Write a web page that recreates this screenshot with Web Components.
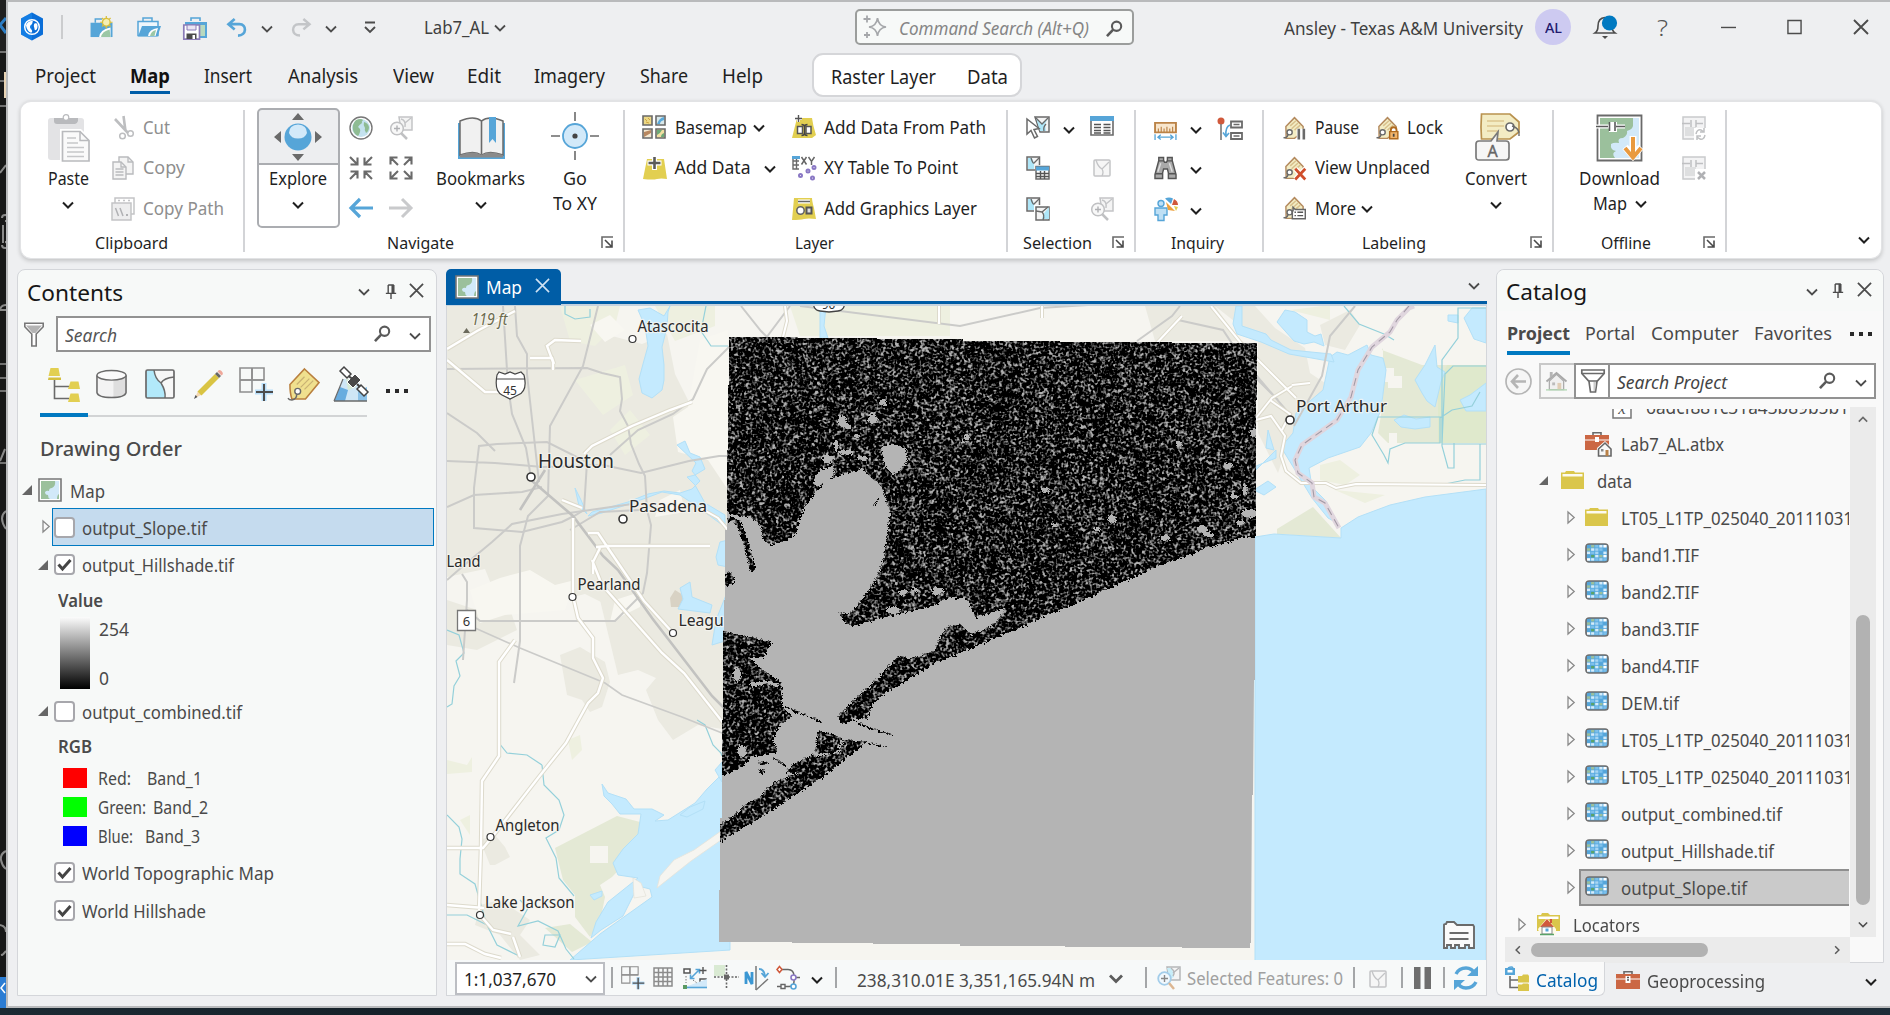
<!DOCTYPE html>
<html lang="en">
<head>
<meta charset="utf-8">
<title>Lab7_AL - Map</title>
<style>
html,body{margin:0;width:1890px;height:1015px;overflow:hidden;background:#16212a}
body{font-family:"Noto Sans","Open Sans",sans-serif;font-size:17.5px;color:#1f1f1f}
</style>
</head>
<body>
<gis-app></gis-app>
<script>
/* ---------- layout helpers: flow rows and stacks spaced by margins ---------- */
const row = (x0, h, items, cls = '') => {
  let c = x0;
  return `<div class="row ${cls}" style="height:${h}px">` + items.map(([x, w, html, dy]) => {
    const m = x - c; c = x + w;
    return `<span class="cell" style="margin-left:${m}px;width:${w}px;${dy ? `margin-top:${dy * 2}px` : ''}">${html}</span>`;
  }).join('') + '</div>';
};
const stack = (y0, rows) => {
  let c = y0;
  return '<div class="stack">' + rows.map(([y, h, html]) => {
    const m = y - c; c = y + h;
    return `<div style="margin-top:${m}px;height:${h}px">${html}</div>`;
  }).join('') + '</div>';
};
const T = (x, w, text, css = '', dy = 0) => [x, w, `<fit-text w="${w}" style="${css}">${text}</fit-text>`, dy];
const I = (x, name, w = 24, h = w, dy = 0) => [x, w, `<ui-icon name="${name}" w="${w}" h="${h}"></ui-icon>`, dy];
const base = `*{box-sizing:border-box}.row{display:flex;align-items:center}.cell{display:flex;flex:none;align-items:center;height:auto}.stack{display:flex;flex-direction:column}.stack>div{flex:none}`;

const define = (name, css, html, after) => customElements.define(name, class extends HTMLElement {
  constructor() {
    super();
    this.attachShadow({ mode: 'open' });
  }
  connectedCallback() {
    this.shadowRoot.innerHTML = `<style>${base}${css}</style>` + (typeof html === 'function' ? html(this) : html);
    if (after) after(this);
  }
});

/* ---------- icons ---------- */
const G = '#6a6a6a', B = '#56a5d8', LB = '#d2e9f9', Y = '#e2cf51';
const rasterCells = () => {
  const c = ['#7ec0ea', '#d5ecfa', '#56a5d8', '#9bbf9b', '#fff', '#a9d5f2', '#5aa368'];
  const m = [[2,3,0,1,4],[3,1,5,0,2],[1,0,5,2,1],[2,6,1,3,4],[4,1,0,5,0]];
  let s = '';
  m.forEach((r, j) => r.forEach((v, i) => s += `<rect x="${2 + i * 4.1}" y="${2 + j * 3.3}" width="3.2" height="2.5" fill="${c[v]}"/>`));
  return s;
};
const tagSmall = `<path d="M2 7L8 .8 14 7v3.5l-6 4.7H2.2z" fill="#f3ecc4" stroke="#b48a5e"/><path d="M5 6.5l4-3.5M6 8.500l4.500-4M8 9.500L12 6" stroke="#d8c08c"/><circle cx="4.600" cy="11" r="1.800" fill="#fff" stroke="#6a6a6a"/><path d="M3.600 12.500C3 14.500 1.500 15.300.4 14.500" stroke="#6a6a6a" fill="none"/>`;
const icons = {
  chev: ['12 8', `<path d="M1 1.500l5 5 5-5" fill="none" stroke="#1f1f1f" stroke-width="2"/>`],
  chevg: ['12 8', `<path d="M1 1.500l5 5 5-5" fill="none" stroke="#4c4c4c" stroke-width="1.800"/>`],
  chevb: ['14 9', `<path d="M1 1.500l6 6 6-6" fill="none" stroke="#5c5c5c" stroke-width="2.800"/>`],
  chevup: ['12 8', `<path d="M1 6.500l5-5 5 5" fill="none" stroke="#6a6a6a" stroke-width="2"/>`],
  chevl: ['8 12', `<path d="M6.500 1l-5 5 5 5" fill="none" stroke="#5a5a5a" stroke-width="2"/>`],
  chevr: ['8 12', `<path d="M1.500 1l5 5-5 5" fill="none" stroke="#5a5a5a" stroke-width="2"/>`],
  logo: ['22 24', `<path d="M11 -2.500l11 6v16l-11 6-11-6v-16z" fill="#0a6ed8"/><path d="M0 3.500l11-6v28l-11-6z" fill="#1b8cf0" opacity=".5"/><circle cx="11" cy="12" r="7.300" fill="none" stroke="#fff" stroke-width="1.500"/><path d="M5 10.500c1-4 5-5 7-4.500-1 1 0 1.500-1 3s-2 1-2 3 3 3 2 5-5-1-6-6.500zM13.500 8.500c2-1 3.500 0 3 3.500s-3 4-3 2-1.500-3 0-5.500z" fill="#fff"/>`],
  newp: ['24 22', `<path d="M0 6h23v15H0z" fill="${B}"/><path d="M5 6V2h7" fill="none" stroke="${B}" stroke-width="1.600"/><path d="M9 21q1-8 12-10v10z" fill="#fff"/><path d="M11 21q1-6 9-8l1 8z" fill="#9bc7a6"/><circle cx="16.500" cy="5.500" r="4" fill="#f5efb4" stroke="#d9bf3c" stroke-width="1.400"/><path d="M16.500-1v2.500M16.500 9.500V12M10 5.500h2.500M20.500 5.500H23M12 1l1.800 1.800M19.300 8.300L21 10M21 1l-1.800 1.800M13.800 8.300L12 10" stroke="#d9bf3c" stroke-width="1.300"/>`],
  openp: ['24 20', `<path d="M1 4.500h20v14H1z" fill="#eef6fc" stroke="${B}" stroke-width="1.500"/><path d="M6 4V1h9v3" fill="none" stroke="${B}" stroke-width="1.500"/><path d="M1 19.500L5 9h19l-3.500 10.500z" fill="${B}"/><path d="M11 19q1-7 10-8l-2.500 8z" fill="#fff"/><path d="M13 19q1-5 6-6l-1.500 6z" fill="#9bc7a6"/>`],
  savep: ['25 23', `<path d="M2 5h22v16H2z" fill="${B}"/><path d="M8 4V1h9v3" fill="none" stroke="${B}" stroke-width="1.600"/><path d="M15 8h7v11h-7z" fill="#b7d9bf"/><path d="M.8 8h15.700v14.200H.8z" fill="#fff" stroke="#8b7cb8" stroke-width="1.700"/><path d="M4 8h9v5H4z" fill="#e9e5f3" stroke="#8b7cb8"/><path d="M3.500 16.500h10v5.500h-10z" fill="#4a4a4a"/><path d="M9.500 18h2.500v4H9.500z" fill="#fff"/>`],
  undo: ['22 20', `<path d="M8 1L1.500 6.500 8 12M2 6.500h11c8 0 8 12-1.500 12" fill="none" stroke="${B}" stroke-width="2.800"/>`],
  redo: ['22 20', `<path d="M14 1l6.500 5.500L14 12M20 6.500H9c-8 0-8 12 1.500 12" fill="none" stroke="#c3c5c8" stroke-width="2.600"/>`],
  custom: ['12 13', `<path d="M1 1.500h10M1 6l5 5 5-5" fill="none" stroke="#4c4c4c" stroke-width="1.900"/>`],
  spark: ['24 24', `<path d="M14.500 3q1 8 8.500 9-7.500 1-8.500 9-1-8-8.500-9 7.500-1 8.500-9z" fill="none" stroke="#a5a7aa" stroke-width="1.700"/><path d="M4 .5v7M.5 4h7M4 17v6M1 20h6" stroke="#a5a7aa" stroke-width="1.800"/>`],
  mag: ['18 18', `<circle cx="11.200" cy="6.600" r="4.900" fill="none" stroke="#5a5a5a" stroke-width="2.200"/><path d="M7.600 10.200L1 17" stroke="#5a5a5a" stroke-width="2.800"/>`],
  bell: ['24 24', `<path d="M1 18q3-2 3-7 0-8 7-8.500 7 .5 7 8.500 0 5 3 7z" fill="none" stroke="#4c4c4c" stroke-width="1.600"/><path d="M8 21h6l-3 3z" fill="#4c4c4c"/><circle cx="15.500" cy="8" r="7.600" fill="#0079c1"/>`],
  min: ['16 16', `<path d="M0 8.500h16" stroke="#4c4c4c" stroke-width="1.500"/>`],
  max: ['16 16', `<path d="M1 1h14v14H1z" fill="none" stroke="#4c4c4c" stroke-width="1.500"/>`],
  x: ['16 16', `<path d="M1 1l14 14M15 1L1 15" stroke="#4c4c4c" stroke-width="1.900"/>`],
  xw: ['16 16', `<path d="M1 1l14 14M15 1L1 15" stroke="#cfe2f3" stroke-width="1.700"/>`],
  pin: ['12 16', `<path d="M3 1h6M3 1v9M9 1v9M0.500 10h11M6 10v6" fill="none" stroke="#4c4c4c" stroke-width="1.500"/><path d="M6.500 1h2.500v9H6.500z" fill="#4c4c4c"/>`],
  launch: ['12 12', `<path d="M1 12V1h11" fill="none" stroke="${G}" stroke-width="1.600"/><path d="M4 4l7 7M11 4.500V11H4.500" fill="none" stroke="#4a4a4a" stroke-width="1.600"/>`],
  paste: ['42 48', `<rect x="0" y="4" width="36" height="42" rx="3" fill="#e3e3e5"/><path d="M6 4h24v3q-1 3-3 3H9q-3 0-3-3z" fill="#b9babd"/><circle cx="18" cy="3.500" r="2.800" fill="#fff" stroke="#b9babd" stroke-width="1.200"/><path d="M12 15h21l10 10v24H12z" fill="#fff"/><path d="M14.500 17.500H32l9 9V47H14.500z" fill="#fafafa" stroke="#b9babd" stroke-width="1.700"/><path d="M32 17.500v9h9" fill="none" stroke="#b9babd" stroke-width="1.500"/><path d="M19 24h9M19 29h11M19 33.500h17M19 38h17M19 42.500h17" stroke="#c6c7c9" stroke-width="1.500"/>`],
  cut: ['20 24', `<path d="M1 3l13 14M9.500 0l2 15" stroke="#bdbec0" stroke-width="2.600"/><circle cx="8.500" cy="20" r="2.800" fill="none" stroke="#bdbec0" stroke-width="1.500"/><circle cx="16.500" cy="17.500" r="2.800" fill="none" stroke="#bdbec0" stroke-width="1.500"/>`],
  copy: ['22 24', `<path d="M7 1h9l5 5v12H7z" fill="#f4f4f4" stroke="#b9babd" stroke-width="1.400"/><path d="M1 6h8l5 5v12H1z" fill="#f4f4f4" stroke="#b9babd" stroke-width="1.400"/><path d="M9 6v5h5M3.500 13h8M3.500 16h8M3.500 19h8M16 1v5h5" fill="none" stroke="#b9babd" stroke-width="1.300"/>`],
  copyp: ['24 24', `<path d="M4 1h19v16H4z" fill="#fff" stroke="#c3c4c6" stroke-width="1.500"/><path d="M1 6h19v17H1z" fill="#ededee" stroke="#c3c4c6" stroke-width="1.500"/><path d="M4.500 11l3 8M9 11l3 8" stroke="#b0b1b4" stroke-width="1.500"/><path d="M15 17h2v2h-2z" fill="#b0b1b4"/><path d="M7 3.500h2M12 3.500h2M17 3.500h2" stroke="#c3c4c6" stroke-width="1.500"/>`],
  explore: ['48 48', `<path d="M24 0l6 7H18zM24 48l6-7H18zM0 24l7-6v12zM48 24l-7-6v12z" fill="${G}"/><circle cx="24" cy="24" r="13.500" fill="${B}"/><path d="M15 20q0-8 9-8.500 9 .5 9 8.500-2 5.500-9 5.500T15 20z" fill="${LB}"/>`],
  globe: ['24 24', `<circle cx="12" cy="12" r="11" fill="#fff" stroke="#777" stroke-width="1.400"/><circle cx="12" cy="12" r="9" fill="#c4e2ef"/><path d="M7 4q5-2 7 0-2 2-1 3-3 2-4 4 3 2 2 5-1 3-2 4-4-2-5-6-1-6 3-10zM15 6q4 1 5 5 0 4-3 6-2-3-1-5-2-3-1-6z" fill="#8fbc93"/>`],
  zoomsel: ['24 24', `<path d="M10 1h13v13H12z" fill="#f4f4f4" stroke="#c3c4c6" stroke-width="1.500"/><path d="M12 3q5 1 4 8M16 7l6-5" fill="none" stroke="#c3c4c6" stroke-width="1.400"/><circle cx="8" cy="12.500" r="6.300" fill="#f8f8f8" stroke="#c0c1c3" stroke-width="1.500"/><path d="M8 9.500v6M5 12.500h6" stroke="#b0b1b4" stroke-width="1.400"/><path d="M12 17l6 6" stroke="#c0c1c3" stroke-width="2.500"/>`],
  arrin: ['24 24', `<path d="M1 1l7 7M8.500 1.500v7h-7M23 1l-7 7M15.500 1.500v7h7M1 23l7-7M1.500 15.500h7v7M23 23l-7-7M22.500 15.500h-7v7" fill="none" stroke="${G}" stroke-width="2.100"/>`],
  arrout: ['24 24', `<path d="M9 9L1.500 1.500M1.500 8.500v-7h7M15 9l7.500-7.500M22.500 8.500v-7h-7M9 15l-7.500 7.500M1.500 15.500v7h7M15 15l7.500 7.500M22.500 15.500v7h-7" fill="none" stroke="${G}" stroke-width="2.100"/>`],
  left: ['24 20', `<path d="M11 1L2 10l9 9M2 10h22" fill="none" stroke="${B}" stroke-width="3.200"/>`],
  right: ['24 20', `<path d="M13 1l9 9-9 9M22 10H0" fill="none" stroke="#c9cacc" stroke-width="3"/>`],
  book: ['47 42', `<path d="M0 6h3v31q14-2 20.500 2Q30 35 44 37V6h3v36H0z" fill="${B}"/><path d="M2 4q14-6 21.500 0Q31-2 45 4v34q-14-5-21.500 0Q16 33 2 38z" fill="#f1f1f1" stroke="${G}" stroke-width="1.500"/><path d="M2 38q14-5 21.500 0Q31 33 45 38v2.500H2z" fill="#8a8a8a"/><path d="M23.500 4v33" stroke="${G}" stroke-width="1.600"/><path d="M31 0h7v26l-3.500-4-3.500 4z" fill="${B}"/>`],
  goxy: ['48 48', `<path d="M24 0v9M24 39v9M0 24h9M39 24h9" stroke="${G}" stroke-width="1.600"/><circle cx="24" cy="24" r="12" fill="${LB}" stroke="${B}" stroke-width="1.800"/><circle cx="24" cy="24" r="2.600" fill="#444"/>`],
  basemap: ['24 24', `<g stroke="${G}" stroke-width="1.600"><path d="M1 1h9v9H1z" fill="#ecd886"/><path d="M14 1h9v9h-9z" fill="#d9e8ea"/><path d="M1 14h9v9H1z" fill="#f5ead4"/><path d="M14 14h9v9h-9z" fill="#f0dfa0"/></g><path d="M15 9q2-6 7-7v3q-4 1-4 4z" fill="#5aa9da"/><path d="M2 22v-5l7-2v3z" fill="#b98860"/><path d="M3 4l2 2M6 3l2 2M4 7l3 1" stroke="#d0a640"/><path d="M15 15h5q-2 4-5 5zM19 22q0-3 3-4v4z" fill="#6da977"/>`],
  adddata: ['24 24', `<path d="M4 3h17l3 20q-6-1-10 0t-14 0z" fill="${Y}"/><path d="M11.500 0v14M4.500 7h14" stroke="#fff" stroke-width="5"/><path d="M11.500 1v12M5.500 7h12" stroke="#5a5a5a" stroke-width="2.600"/>`],
  addpath: ['24 24', `<path d="M5 3h15q1 8 4 17l-4 3H0z" fill="${Y}"/><path d="M6.500 0v7M3 3.500h7" stroke="#fff" stroke-width="3"/><path d="M6.500 0v7M3 3.500h7" stroke="#555" stroke-width="1.400"/><path d="M5.500 11.500h5v7h-5zM14 11.500h5v7h-5z" fill="#fff" stroke="#555" stroke-width="1.500"/><path d="M9.500 9.500q3 0 3 2.500v6q0 2.500-3 2.500M15.500 9.500q-3 0-3 2.500v6q0 2.500 3 2.500" fill="none" stroke="#444" stroke-width="1.400"/>`],
  xytable: ['24 24', `<path d="M0 1h7M1 1v12h6M1 5h6M1 9h6M4.500 1v12" fill="none" stroke="${G}" stroke-width="1.400"/><path d="M0 0h8v3H0z" fill="${B}"/><path d="M9.500 1l5 7.500M14.500 1l-5 7.500M16.500 1l3 4.500 3-4.500M19.500 5v4" stroke="#666" stroke-width="1.500" fill="none"/><g fill="#fff" stroke="#8a78c4" stroke-width="2"><circle cx="8.500" cy="19.500" r="1.500"/><circle cx="16" cy="15" r="1.500"/><circle cx="22" cy="11.500" r="1.500"/><circle cx="20.500" cy="22" r="1.500"/></g>`],
  addgraph: ['24 24', `<path d="M2 1h18q0 3 2 10l2 11q-8-1-12 0t-12 1z" fill="${Y}"/><path d="M6 4.500h12" stroke="#fff" stroke-width="4"/><path d="M6 4.500h12" stroke="#666" stroke-width="1.600"/><circle cx="8.500" cy="13.500" r="3.700" fill="#fff" stroke="#666" stroke-width="1.600"/><path d="M14.500 10.500h5v6h-5z" fill="#ddd" stroke="#555" stroke-width="2"/>`],
  select: ['24 24', `<path d="M9 1h14v15H14z" fill="#f4f4f4" stroke="${G}" stroke-width="1.500"/><path d="M10 2l5 6 7-6v0l-3 6 1 7h-6z" fill="#aee6f8"/><path d="M10 2l6 6 6-6M18 15q-1-4 2-7" fill="none" stroke="${G}" stroke-width="1.300"/><path d="M1 3v15l4-3.500 3.500 7.500 3-1.500-3.500-7 5-1z" fill="#fff" stroke="${G}" stroke-width="1.500"/>`],
  table: ['24 20', `<path d="M1 1h22v18H1z" fill="#fff" stroke="${G}" stroke-width="1.600"/><path d="M0 0h24v5H0z" fill="${B}"/><path d="M4 8.500h7M4 11.500h7M4 14.500h7M4 17h7M13.500 8.500h7M13.500 11.500h7M13.500 14.500h7M13.500 17h7" stroke="#555" stroke-width="1.500"/>`],
  selcalc: ['24 24', `<path d="M1 1h12.500v13H1z" fill="#f4f4f4" stroke="${G}" stroke-width="1.500"/><path d="M2 2h4l2 5v6H2z" fill="#aee6f8"/><path d="M5 2q2 6 3 5t5-5" fill="none" stroke="${G}" stroke-width="1.300"/><path d="M9 9h15v15H9z" fill="#fff"/><path d="M10 10.500h13V23H10z" fill="#fff" stroke="${G}" stroke-width="1.500"/><path d="M10 10.500h13v4H10z" fill="${B}"/><path d="M10 17.500h13M10 20.500h13M14.500 15v8M18.500 15v8" stroke="#555" stroke-width="1.400"/>`],
  selswitch: ['24 24', `<path d="M1 1h12.500v13H1z" fill="#f4f4f4" stroke="${G}" stroke-width="1.500"/><path d="M2 2h4l2 5v6H2z" fill="#aee6f8"/><path d="M5 2q2 6 3 5t5-5" fill="none" stroke="${G}" stroke-width="1.300"/><path d="M8 8h16v16H8z" fill="#fff"/><path d="M10 10h13v13H10z" fill="#f4f4f4" stroke="${G}" stroke-width="1.500"/><path d="M16 22q0-4 3-7t4-5v12z" fill="#aee6f8"/><path d="M10 14l6 1 6-5M16 15q3 3 1 8" fill="none" stroke="${G}" stroke-width="1.300"/>`],
  selclear: ['18 18', `<rect x="1" y="1" width="16" height="16" rx="1" fill="#f6f6f6" stroke="#c3c4c6" stroke-width="1.500"/><path d="M3 1q2 7 6 9l7-7M9 10q2 3 0 7" fill="none" stroke="#c3c4c6" stroke-width="1.300"/>`],
  zoomselb: ['24 24', `<path d="M10 1h13v13H12z" fill="#f4f4f4" stroke="#b5b6b8" stroke-width="1.500"/><path d="M10 2l5 0 2 9-4 2z" fill="#c8edf8"/><path d="M14 2q5 4 2 8M16 7l6-5" fill="none" stroke="#b5b6b8" stroke-width="1.400"/><circle cx="7.500" cy="12.500" r="6.300" fill="#f1f8fd" stroke="#a3cdea" stroke-width="1.800"/><path d="M7.500 9v7M4 12.500h7" stroke="#888" stroke-width="1.400"/><path d="M12 17l5 6" stroke="#dcb692" stroke-width="2.500"/>`],
  ruler: ['24 20', `<path d="M1 2h22v10H1z" fill="#f8e6cd" stroke="#bb8347" stroke-width="2"/><path d="M4.500 12V8M7.500 12V6M10.500 12V8M13.500 12V6M16.500 12V8M19.500 12V6" stroke="#bb8347" stroke-width="1.200"/><path d="M1 14v6M23 14v6M4 17h16M7 14.500L4 17l3 2.500M17 14.500l3 2.500-3 2.500" fill="none" stroke="${B}" stroke-width="1.400"/>`],
  inq: ['26 24', `<circle cx="4" cy="4" r="3.500" fill="#d0593b"/><path d="M4 7v16" stroke="#777" stroke-width="1.600"/><path d="M13 8q-5 2-4 11M6 15.500l3 4 3-3.500" fill="none" stroke="${B}" stroke-width="1.600"/><path d="M14 4.500h11v6H14zM14 16h11v6H14z" fill="#fff" stroke="${G}" stroke-width="1.800"/><path d="M16.500 7.500h6M16.500 19h6" stroke="${G}" stroke-width="1.300"/>`],
  bino: ['24 24', `<path d="M5 1h5v3l1 2h2l1-2V1h5v3l4 15v4h-8v-6l-1-4h-4l-1 4v6H1v-4L5 4z" fill="#a9a9a9" stroke="#555" stroke-width="1.500"/><path d="M1 18h8M15 18h8M4.500 4.500h6M13.500 4.500h6" stroke="#555" stroke-width="1.400"/><path d="M7 7l-3 9M16 7l3 9" stroke="#ddd" stroke-width="1.500"/>`],
  info: ['24 24', `<circle cx="7" cy="6.500" r="3" fill="#bfe0f5" stroke="${B}" stroke-width="1.400"/><path d="M1 11h12v7h-3v5.500H4V18H1z" fill="#bfe0f5" stroke="${B}" stroke-width="1.400"/><path d="M11 1.500q4-2 8 0L17 7z" fill="${B}"/><path d="M20 2q4 2 4 6l-6 0z" fill="#d0593b"/><path d="M12 5l9 9-7-1z" fill="#eea13d"/><path d="M20 9l4 1-2 4z" fill="#e2cf51"/>`],
  lpause: ['16 16', tagSmall + `<path d="M9.500 8.500h7V16h-7z" fill="#fff"/><path d="M11 8.500v7.500M14.500 8.500v7.500" stroke="${G}" stroke-width="1.800"/>`],
  llock: ['16 16', tagSmall + `<path d="M10.300 11V9.500q0-2 2-2t2 2V11" fill="#fff" stroke="#b06a20" stroke-width="1.300"/><path d="M9.500 10.500h5.700v5H9.500z" fill="#f1b46c" stroke="#b06a20"/><path d="M12.300 12v2" stroke="#444" stroke-width="1.200"/>`],
  lview: ['16 16', tagSmall + `<path d="M8.500 8.500L15.500 16M15.500 8.500L8.500 16" stroke="#fff" stroke-width="3.600"/><path d="M8.500 8.500L15.500 16M15.500 8.500L8.500 16" stroke="#d04e2c" stroke-width="1.900"/>`],
  lmore: ['16 16', tagSmall + `<path d="M7 10V7.500L8.500 9h7v6.500h-9V10z" fill="#fff" stroke="#666"/><path d="M8 11h1M10 11h4M8 13.300h1M10 13.300h4" stroke="#555"/>`],
  convert: ['46 48', `<path d="M6.500 1H35l9 8v10l-9 7H6.500q-1-12 0-25z" fill="#f3ecc4" stroke="#b9924f" stroke-width="1.700"/><path d="M12 8h17M12 13h17M12 18h12" stroke="#ddc58f" stroke-width="1.700"/><circle cx="35" cy="14" r="4" fill="#fff" stroke="${G}" stroke-width="1.700"/><path d="M37 13q8 2 7 10" fill="none" stroke="${G}" stroke-width="1.500"/><path d="M23 19l-1 9h9q3 0 3 3v13q0 3-3 3H4q-3 0-3-3V31q0-3 3-3h12z" fill="#f6f6f6" stroke="#7a7a7a" stroke-width="1.700"/><text x="17.500" y="43.500" text-anchor="middle" font-family="Noto Sans,sans-serif" font-size="16" fill="#666" stroke="#666" stroke-width=".4">A</text>`],
  download: ['48 48', `<path d="M1.500 1.500h44v45h-44z" fill="#fff" stroke="${G}" stroke-width="1.800"/><path d="M4 4h39v40H4z" fill="#9bc09c"/><path d="M37 4h6v40H19q-4-5 1-7-6-1-5-7 3-2 8-1-2-5 4-5 5-3 4-7 7-2 6-7z" fill="${LB}"/><path d="M0 12.500h13M15 8v10M19 8v10M21 12.500h8" stroke="#fff" stroke-width="4"/><path d="M0 12.500h12M13.500 8v9M19 8v9M20 12.500h9" stroke="#5a5a5a" stroke-width="1.600"/><path d="M37 22v20M29 33l8 9 8-9" fill="none" stroke="#fff" stroke-width="7"/><path d="M37 23v20M29 34l8 9.500 8-9.500" fill="none" stroke="#e99a3f" stroke-width="4"/>`],
  offsync: ['24 24', `<path d="M1 1h22v22H1z" fill="#f3f3f4" stroke="#c9cacc" stroke-width="1.500"/><path d="M3 11h11v9H3z" fill="#dedfe0"/><path d="M0 7.500h8M9 4v7M14 4v7M14 7.500h7" stroke="#bfc0c2" stroke-width="1.500"/><path d="M12 12h12v12H12z" fill="#fff"/><path d="M14 18q1-5 5-4l3 2M22 12v4h-4M23 19q-1 5-5 4l-3-2M15 24v-4h4" fill="none" stroke="#bfc0c2" stroke-width="1.500"/>`],
  offrem: ['24 24', `<path d="M1 1h22v22H1z" fill="#f3f3f4" stroke="#c9cacc" stroke-width="1.500"/><path d="M3 11h11v9H3z" fill="#dedfe0"/><path d="M0 7.500h8M9 4v7M14 4v7M14 7.500h7" stroke="#bfc0c2" stroke-width="1.500"/><path d="M13 13h11v11H13z" fill="#fff"/><path d="M16 16l7 7M23 16l-7 7" stroke="#b0b1b4" stroke-width="2.500"/>`],
  funnel: ['20 24', `<path d="M.8.800h18.400v3.500l-7 7.200V23.500H7.800v-12L.8 4.300z" fill="#fff" stroke="#777" stroke-width="1.600"/><path d="M2 3h16l-6.500 7.500H8.500z" fill="#b3b3b3"/>`],
  funnel2: ['24 24', `<path d="M.8 1h22.400v3.500l-7.200 8L14.500 23h-5L8 12.500l-7.200-8z" fill="#fff" stroke="${G}" stroke-width="1.700"/><path d="M1 4.500h22M8 12h8" stroke="${G}" stroke-width="1.500"/><path d="M12.500 13v9h1.500l1-9z" fill="#ccc"/>`],
  tree: ['34 34', `<path d="M7.500 10v20.500H22M7.500 18.500H22" fill="none" stroke="${G}" stroke-width="1.600"/><path d="M3.500 0h8l1.500 8H1.500zM23.500 13.500h8L33 21H21zM23.500 25.500h8L33 34H21z" fill="${Y}"/><path d="M1.500 9.500h12.500v2.500H1z" fill="#d4bf3f"/>`],
  cyl: ['32 30', `<path d="M1 6v18q1 5 15 5t15-5V6z" fill="#f3f3f3"/><path d="M18 10v19q12-1 13-5V6q-3 4-13 4z" fill="#dedede"/><path d="M1 6v18q1 5 15 5t15-5V6" fill="none" stroke="${G}" stroke-width="1.600"/><ellipse cx="16" cy="6" rx="15" ry="5" fill="#fafafa" stroke="${G}" stroke-width="1.500"/>`],
  bysel: ['30 30', `<path d="M1 1h28v28H1z" fill="#f7f7f7"/><path d="M1 1h8q1 9 7 13 5 8 4 15H1z" fill="#b2e9fa"/><path d="M9 1q1 9 7 13 5 8 4 15M16 14q3-5 13-6" fill="none" stroke="${G}" stroke-width="1.500"/><rect x="1" y="1" width="28" height="28" rx="1.500" fill="none" stroke="${G}" stroke-width="1.700"/>`],
  pencil: ['29 29', `<path d="M1 28l3-7 4 3.500z" fill="#f3d7b0"/><path d="M0 29l1.500-4 2 2z" fill="#555"/><path d="M3.500 21.500L21 4l4 4L7.500 25.500z" fill="#d9c443"/><path d="M21 4l2-2 4 4-2 2z" fill="#666"/><path d="M23.500 1.500l1.500-1.500q3 0 4 4l-1.500 1.500z" fill="#efa89a"/>`],
  gridadd: ['35 35', `<path d="M1 1h24v12H1zM1 1h12v24H1z" fill="none" stroke="#8e8e8e" stroke-width="1.600"/><path d="M13 1v12M1 13h24" stroke="#8e8e8e" stroke-width="1.600"/><path d="M25 16v18M16 25h18" stroke="#b9dffa" stroke-width="5"/><path d="M25 17v17M17 25h17" stroke="#4d4d4d" stroke-width="2"/>`],
  tag: ['34 34', `<path d="M17 1l15 14L18 32H4q-2-6-2-15z" fill="#f0e08e" stroke="#b9803f" stroke-width="1.600"/><path d="M9 17l8-8M13 20l9-9M17 22l9-9" stroke="#c9b274" stroke-width="1.300"/><circle cx="10" cy="24" r="3" fill="#fff" stroke="${G}" stroke-width="1.500"/><path d="M9 27q0 5-5 6-3 0-4-2" fill="none" stroke="${G}" stroke-width="1.500"/>`],
  sat: ['33 35', `<path d="M9 12L0 34h33V24L20 12z" fill="#cfe6f6"/><path d="M6 20l8 3-3 11H0z" fill="#68acdf"/><path d="M24 24l9-4v14h-9z" fill="#8cc2e8"/><path d="M12 12l6 0 4 8-8 3z" fill="#d8ead6"/><path d="M0 34h33" stroke="${G}" stroke-width="1.500"/><path d="M9 12L0 34" stroke="${G}" stroke-width="1.200"/><path d="M6 4l4-4 7 7-4 4zM23 22l4-4 7 7-4 4z" fill="#fff" stroke="#444" stroke-width="1.500"/><path d="M13 15l8-8 6 6-8 8z" fill="#4a4a4a" stroke="#fff"/><path d="M14.500 9l4 3M23 17l3 3" stroke="#444" stroke-width="2"/>`],
  dots: ['22 4', `<path d="M0 0h4v4H0zM9 0h4v4H9zM18 0h4v4h-4z" fill="#2a2a2a"/>`],
  triopen: ['10 10', `<path d="M10 0v10H0z" fill="#666"/>`],
  triclosed: ['8 13', `<path d="M1 1l6.200 5.500L1 12z" fill="#fafafa" stroke="#8a8a8a" stroke-width="1.300"/>`],
  map: ['24 24', `<path d="M1 1h22v22H1z" fill="#fff" stroke="#777" stroke-width="1.600"/><path d="M3 3h18v18H3z" fill="#9bc09c"/><path d="M17 3h4v13q-2 1-2 5h-7q-2-1-2-4-3 0-3-3 2-2 4-1 0-3 3-3 4-2 3-7z" fill="${LB}"/>`],
  folder: ['23 18', `<path d="M0 1.500h4L5 0h8l1 1.500h9V18H0z" fill="#dac64b"/><path d="M1.500 3h20v2.500H1.500z" fill="#fcfaf0"/>`],
  raster: ['24 20', `<rect x="1" y="1" width="22" height="18" rx="3" fill="#56a9e0" stroke="#6f6f6f" stroke-width="1.700"/>${rasterCells()}`],
  atbx: ['27 25', `<path d="M0 3h24v15H0z" fill="#cb6744"/><path d="M8 3V.8h8V3" fill="none" stroke="${G}" stroke-width="1.600"/><path d="M0 8h24" stroke="#fff"/><path d="M10 5h4v5h-4z" fill="#fff"/><path d="M11.500 22L12 16l8-7 7 7v9H12z" fill="#fff"/><path d="M13.500 24V17l6.500-6 6 6v7z" fill="#f7f7f7" stroke="#666" stroke-width="1.600"/><path d="M20.500 18h3v6h-3z" fill="#b98148"/><path d="M16 17h2.500v2.500H16z" fill="#888"/>`],
  formula: ['20 24', `<path d="M1 1h18v22H1z" fill="#fff" stroke="#777" stroke-width="1.500"/><text x="10" y="19" text-anchor="middle" font-family="Liberation Serif,serif" font-style="italic" font-size="17" fill="#555">x</text>`],
  locators: ['23 22', `<path d="M0 2h4l1-2h6l2 2h10v16H0z" fill="#dac64b"/><path d="M1.500 3.500h20V6h-20z" fill="#fff"/><path d="M1 16l9-11 9 11v6H3z" fill="#fffbe8"/><path d="M3 14l7-8 7 8z" fill="#d0593b"/><path d="M5 14v7h10v-7z" fill="#fff" stroke="#888"/><path d="M8.500 15.500h3v3h-3z" fill="${B}"/><path d="M3 21.500h14" stroke="#5aa368" stroke-width="1.500"/><path d="M14 6v4" stroke="#d0593b" stroke-width="2"/>`],
  back: ['27 27', `<circle cx="13.500" cy="13.500" r="12.500" fill="#f6f6f6" stroke="#b5b5b5" stroke-width="1.700"/><path d="M13 7l-6 6.500 6 6.500M7 13.500h14" fill="none" stroke="#b5b5b5" stroke-width="2.600"/>`],
  home: ['22 20', `<path d="M3.500 10v9h15v-9L11 3z" fill="#f0f0f0" stroke="#aaa" stroke-width="1.300"/><path d="M.5 10.500L11 1.500l10.500 9" fill="none" stroke="#a8a8a8" stroke-width="1.900"/><path d="M4 .5h3V5L4 7z" fill="#b5b5b5"/><path d="M12 12h4v7h-4z" fill="#e0cdb6"/><path d="M6.500 11.500h3v3h-3z" fill="#bbb"/><path d="M0 19.300h22" stroke="#b3d8b5" stroke-width="1.400"/>`],
  cattab: ['24 24', `<path d="M0 1h10v7H0z" fill="${B}"/><path d="M3 1q4-2 5 0" stroke="${B}" stroke-width="1.500" fill="none"/><path d="M2.500 3h5v2.500h-5z" fill="#fff"/><path d="M5 9v11.500h9M5 13h9" fill="none" stroke="${G}" stroke-width="1.600"/><path d="M13 9h4l1-1.500h5L24 9v6.500H13zM13 17.500h4l1-1h5l1 1V24H13z" fill="#dac64b"/>`],
  toolbox: ['24 18', `<path d="M0 3h24v15H0z" fill="#cb6744"/><path d="M8 3V.8h8V3" fill="none" stroke="${G}" stroke-width="1.600"/><path d="M0 8h24" stroke="#fff"/><path d="M9.500 5h5v7h-5z" fill="#fff"/><path d="M11 6.500h2M11 9h2" stroke="#555" stroke-width="1.500"/>`],
  grid: ['20 20', `<path d="M1 1h18v18H1zM1 5.500h18M1 10h18M1 14.500h18M5.500 1v18M10 1v18M14.500 1v18" fill="none" stroke="#8c8c8c" stroke-width="1.500"/>`],
  s3: ['25 23', `<path d="M1 3h6v4H1zM17 13h6v4h-6z" fill="#fff" stroke="#555" stroke-width="1.500"/><path d="M8 12L16 4M12.500 3.500h4v4M7.500 8.500v4h4" fill="none" stroke="${B}" stroke-width="1.600"/><path d="M20 1v7M16.500 4.500h7" stroke="#555" stroke-width="1.400"/><path d="M2 21L24 21V13z" fill="#d2e9f9"/><path d="M3 21.500h21" stroke="${B}" stroke-width="1.600"/><path d="M0 19h4v4H0z" fill="#5a9a62"/><path d="M3 10v7" stroke="#777" stroke-dasharray="1.500"/><path d="M10 14l4 3" stroke="#777" stroke-dasharray="1.500"/>`],
  s4: ['25 24', `<path d="M0 0h11v11H0z" fill="#d9ead3"/><path d="M12.500 0v24M0 12h25" stroke="#666" stroke-width="1.600" stroke-dasharray="2 1.500"/><path d="M10 9.500h5v5h-5z" fill="#666"/>`],
  s5: ['25 24', `<path d="M2 18V6l6 12V6" fill="none" stroke="#3b97d3" stroke-width="2.800"/><path d="M12 0v24" stroke="#777" stroke-width="1.500"/><path d="M12 24L24 13" stroke="#777" stroke-width="1.400"/><path d="M15 3q5 0 6 7M17.500 7l3.500 4 3.500-4" fill="none" stroke="${B}" stroke-width="1.800"/>`],
  s6: ['25 24', `<path d="M5 3.500h7q6 0 6 7v5q0 5-5 5H1M18 11.500h6" fill="none" stroke="#666" stroke-width="1.500"/><path d="M3.500.5l2.500 3-2.500 3-2.500-3z" fill="#fff" stroke="#d0593b" stroke-width="1.500"/><circle cx="17.500" cy="11.500" r="2.500" fill="#fff" stroke="#8a78c4" stroke-width="1.600"/><path d="M5 18.500h4v4H5z" fill="#fff" stroke="#666" stroke-width="1.400"/><circle cx="17.500" cy="20.500" r="2.500" fill="#fff" stroke="${B}" stroke-width="1.600"/>`],
  pause: ['18 22', `<path d="M0 0h6.500v22H0zM10.500 0H17v22h-6.500z" fill="#6e6e6e"/>`],
  refresh: ['24 24', `<path d="M2 8Q5 2 12 2q6 0 9 6M22 16q-3 6-10 6-6 0-9-6" fill="none" stroke="${B}" stroke-width="3.400"/><path d="M24 0v10H13zM0 24V14h11z" fill="${B}"/>`],
  note: ['32 28', `<path d="M1 4q0-1 2-1l1-2h7l3 3h16l1 1.500V27h-5v-3h-4v3h-6v-3h-4v3H8v-3H4v3H1z" fill="#fafafa" stroke="#6a6a6a" stroke-width="1.900"/><path d="M6.500 12h19M6.500 18h19" stroke="#6a6a6a" stroke-width="1.900"/>`]
};
define('ui-icon', ':host{display:block;flex:none;line-height:0}svg{display:block;overflow:visible}',
  el => {
    const [vb, body] = icons[el.getAttribute('name')];
    return `<svg width="${el.getAttribute('w')}" height="${el.getAttribute('h')}" viewBox="0 0 ${vb}">${body}</svg>`;
  });

/* Text condensed or widened to a given advance width */
define('fit-text', ':host{display:block;flex:none;line-height:24px;white-space:pre}span{display:inline-block;transform-origin:0 50%}', '<span><slot></slot></span>',
  el => {
    const w = +el.getAttribute('w'), s = el.shadowRoot.querySelector('span');
    el.style.width = w + 'px';
    const n = s.offsetWidth ? s.getBoundingClientRect().width : w;
    s.style.transform = `scaleX(${w / n})`;
  });

define('check-box', ':host{display:block;width:21px;height:21px;border:2px solid #a7a7ac;border-radius:4px;background:#fff;box-sizing:border-box;flex:none}svg{display:block}',
  el => el.hasAttribute('checked') ? '<svg width="17" height="17" viewBox="0 0 17 17"><path d="M2.500 8.500l4 4.500 8-9" fill="none" stroke="#454545" stroke-width="3"/></svg>' : '');

/* ---------- title bar and tabs ---------- */
const D = 'color:#3f3f3f;font-size:18px';
define('title-bar', `:host{display:block;height:50px}.sep{width:2px;height:24px;background:#cbccce}
.search{display:block;width:279px;height:36px;border:2px solid #9b9d9c;border-radius:5px;background:#f7f9f8}
.av{width:36px;height:36px;border-radius:50%;background:#cdcaf1;display:flex;align-items:center;justify-content:center}`,
  row(8, 50, [I(20.5, 'logo', 22, 24), [61, 2, '<div class="sep"></div>'], I(90, 'newp', 24, 21), I(137, 'openp', 24, 20), I(183, 'savep', 25, 23, 1), I(227, 'undo', 21, 19), I(261, 'chevg', 12, 8, 2), I(290, 'redo', 21, 19), I(325, 'chevg', 12, 8, 2), I(364, 'custom', 12, 13), T(423.5, 65, 'Lab7_AL', D), I(494, 'chevg', 12, 8, .5),
  [855, 279, `<div class="search">${row(857, 32, [I(863, 'spark', 24), T(899, 190, 'Command Search (Alt+Q)', 'font-style:italic;color:#858585;font-size:17.5px', 1), I(1106, 'mag', 17, 17, 1)])}</div>`],
  T(1284, 239, 'Ansley - Texas A&amp;M University', D, 1), [1535, 36, `<div class="av"><fit-text w="17" style="color:#231a6e;font-size:15px;font-weight:500">AL</fit-text></div>`], I(1594, 'bell', 24, 24, -.5), T(1657, 11, '?', 'font-size:22px;color:#555;font-weight:300'), I(1721, 'min', 15, 16), I(1787, 'max', 15, 16), I(1853, 'x', 16, 16)]));

const tb = 'font-size:19.5px;color:#1f1f1f';
define('ribbon-tabs', `:host{display:block;height:45px}.on{display:flex;height:33px;border-bottom:3px solid #005ea8;margin-top:5px;align-items:center;padding-top:1px}
.ctx{width:210px;height:44px;border:2px solid #d5d6d9;border-radius:11px;background:#fff}`,
  row(8, 45, [T(35, 61, 'Project', tb, 1.5), [130, 40, `<div class="on"><fit-text w="40" style="${tb};font-weight:700;color:#111">Map</fit-text></div>`], T(204, 48, 'Insert', tb, 1.5), T(288, 70, 'Analysis', tb, 1.5), T(393, 41, 'View', tb, 1.5), T(467, 34, 'Edit', tb, 1.5), T(534, 71, 'Imagery', tb, 1.5), T(640, 48, 'Share', tb, 1.5), T(722, 41, 'Help', tb, 1.5),
  [812, 210, `<div class="ctx">${row(814, 40, [T(831, 105, 'Raster Layer', tb, 1.5), T(967, 41, 'Data', tb, 1.5)])}</div>`, .5]]));

/* ---------- ribbon ---------- */
define('ribbon-group', `:host{display:block;flex:none;height:156px}.in{display:flex;flex-direction:column;height:142px;margin-top:8px;border-right:2px solid #d3d4d7}
.main{display:flex;height:119px}.foot{height:24px}`,
  el => {
    const n = a => +el.getAttribute(a), x0 = n('x0'), x1 = n('x1');
    el.style.width = (x1 - x0) + 'px';
    const f = [T(n('lx'), n('lw'), el.getAttribute('label'), 'font-size:16.5px', 1.5)];
    if (n('launch')) f.push(I(n('launch'), 'launch', 12, 12, 1));
    return `<div class="in"><div class="main"><slot></slot></div><div class="foot">${row(x0, 26, f)}</div></div>`;
  });
const group = (x0, x1, label, lx, lw, launch, cols) => {
  let c = x0;
  return `<ribbon-group x0="${x0}" x1="${x1}" label="${label}" lx="${lx}" lw="${lw}" launch="${launch}">` + cols.map(([x, w, html]) => {
    const m = x - c; c = x + w;
    return `<div style="flex:none;margin-left:${m}px;width:${w}px">${html}</div>`;
  }).join('') + '</ribbon-group>';
};
const gr = 'color:#8e8e8e';
/* ribbon captions sit one pixel above the line's centre */
const R = (x, w, t, css = '') => T(x, w, t, css, -1);
const col3 = (x, w, rows) => [x, w, stack(110, rows.map((r, i) => [[115.5, 155.5, 197][i], 24, r.length ? row(x, 24, r) : '']))];
const big = (x, w, iconItem, iy, ih, lines) => [x, w, stack(110, [[iy, ih, row(x, ih, [iconItem])], ...lines.map(([y, it]) => [y - 12, 24, row(x, 24, it)])])];
define('ribbon-bar', `:host{display:flex;margin-left:11.5px;width:1862px;height:159px;box-sizing:border-box;border:1px solid #e2e3e5;border-radius:11px;background:#fff;box-shadow:0 2px 4px rgba(0,0,0,.18);overflow:hidden;border-top-width:2px}
.ex{width:83px;height:120px;margin-top:-2px;border:2px solid #abadb1;border-radius:5px;background:linear-gradient(#edeef0 0 53px,#abadb1 53px 55px,#fff 55px)}
.end{display:flex;align-items:flex-end;padding:0 0 14px 131px}`,
  group(21, 245, 'Clipboard', 95, 73, 0, [
    big(48, 42, I(48, 'paste', 42, 48), 114, 48, [[179, [R(48, 41, 'Paste')]], [205, [I(62, 'chev', 12, 8)]]]),
    col3(111, 120, [[I(114, 'cut', 20, 24), R(143, 27, 'Cut', gr)], [I(112, 'copy', 22, 24), R(143, 42, 'Copy', gr)], [I(111, 'copyp', 24, 24), R(143, 81, 'Copy Path', gr)]])]) +
  group(245, 625, 'Navigate', 387, 67, 601, [
    [257, 83, `<div class="ex">${stack(110, [[113, 48, row(259, 48, [I(274, 'explore', 48, 48)])], [167, 24, row(259, 24, [R(269, 58, 'Explore')])], [193, 24, row(259, 24, [I(292, 'chev', 12, 8)])]])}</div>`],
    col3(349, 66, [[I(349, 'globe'), I(389, 'zoomsel')], [I(349, 'arrin'), I(389, 'arrout')], [I(349, 'left', 24, 20, -1), I(389, 'right', 24, 20, -1)]]),
    big(436, 90, I(458, 'book', 47, 42), 115, 45, [[179, [R(436, 89, 'Bookmarks')]], [205, [I(475, 'chev', 12, 8)]]]),
    big(551, 50, I(551, 'goxy', 48, 48), 112, 48, [[179, [R(563, 24, 'Go')]], [203, [T(553, 44, 'To XY')]]])]) +
  group(625, 1008, 'Layer', 795, 39, 0, [
    col3(642, 136, [[I(642.5, 'basemap', 24, 24, -.5), R(675, 72, 'Basemap'), I(753, 'chev', 12, 8)], [I(643, 'adddata'), R(675, 76, 'Add Data'), I(764, 'chev', 12, 8, 1)], []]),
    col3(792, 200, [[I(792, 'addpath', 24, 24, -.5), R(824, 162, 'Add Data From Path')], [I(792, 'xytable'), R(824, 134, 'XY Table To Point')], [I(792, 'addgraph'), R(824, 153, 'Add Graphics Layer')]])]) +
  group(1008, 1136, 'Selection', 1023, 69, 1112, [
    col3(1026, 50, [[I(1026, 'select'), I(1063, 'chev', 12, 8, 2)], [I(1026, 'selcalc')], [I(1026, 'selswitch')]]),
    col3(1090, 26, [[I(1090, 'table', 24, 20, -1.5)], [I(1093, 'selclear', 18, 18)], [I(1090, 'zoomsel')]])]) +
  group(1136, 1264, 'Inquiry', 1171, 53, 0, [
    col3(1154, 50, [[I(1154, 'ruler', 23, 19, 3), I(1190, 'chev', 12, 8, 2)], [I(1154, 'bino', 23, 24), I(1190, 'chev', 12, 8, 2)], [I(1154, 'info'), I(1190, 'chev', 12, 8, 2)]]),
    col3(1217, 28, [[I(1217, 'inq', 26, 24, 1)], [], []])]) +
  group(1264, 1554, 'Labeling', 1362, 64, 1530, [
    col3(1283, 165, [[I(1283, 'lpause', 23, 24), R(1315, 44, 'Pause'), I(1376, 'llock', 23, 24), R(1407, 36, 'Lock')], [I(1283, 'lview', 23, 24), R(1315, 115, 'View Unplaced')], [I(1283, 'lmore', 23, 24, -1), R(1315, 41, 'More'), I(1361, 'chev', 12, 8)]]),
    big(1465, 64, I(1475, 'convert', 46, 48), 113, 48, [[179, [R(1465, 62, 'Convert')]], [205, [I(1490, 'chev', 12, 8)]]])]) +
  group(1554, 1727, 'Offline', 1601, 50, 1703, [
    big(1579, 82, I(1596, 'download', 48, 48), 114, 48, [[179, [R(1579, 81, 'Download')]], [203, [T(1593, 34, 'Map'), I(1635, 'chev', 12, 8, 1)]]]),
    col3(1682, 24, [[I(1682, 'offsync')], [I(1682, 'offrem')], []])]) +
  `<div class="end"><ui-icon name="chev" w="12" h="8"></ui-icon></div>`);

/* ---------- contents pane ---------- */
const tx = 'color:#4a4a4a;font-size:17.5px', ttl = 'color:#161616;font-size:22.5px';
const C = (x, on) => [x, 21, `<check-box ${on ? 'checked' : ''}></check-box>`];
const bar = (x, w, css) => [x, w, `<div style="width:${w}px;${css}"></div>`];
define('contents-pane', `:host{display:block;width:420px;height:727px;box-sizing:border-box;border:1.500px solid #d4d6da;border-radius:8px 8px 0 0;background:#f7f9f8;flex:none}
.search{width:375px;height:36px;border:2px solid #929292;background:#fff}.sel{width:382px;height:38px;border:1px solid #0079c1;background:#c5dbee}`,
  stack(270, [
    [272, 40, row(18, 40, [T(26.5, 96, 'Contents', ttl, 1), I(358, 'chevg', 12, 8), I(385, 'pin', 12, 15, -.5), I(409, 'x', 15, 15, -1.5)])],
    [316, 36, row(18, 36, [I(24, 'funnel', 20, 25), [56, 375, `<div class="search">${row(58, 32, [T(64.5, 52, 'Search', 'font-style:italic;color:#555;font-size:17.5px', .5), I(374, 'mag', 17, 17, -.5), I(409, 'chevg', 12, 8, 2)])}</div>`]])],
    [367, 35, row(18, 35, [I(47, 'tree', 34, 34), I(96, 'cyl', 31, 30, -.5), I(145, 'bysel', 30, 30, -.5), I(194, 'pencil', 29, 29, -.5), I(239, 'gridadd', 35, 35), I(288, 'tag', 33, 33, -.5), I(334, 'sat', 33, 35), I(386, 'dots', 22, 4, 6)])],
    [412, 5, row(18, 5, [bar(40, 48, 'height:4px;background:#0079c1'), bar(88, 279, 'height:2px;background:#d2d4d5;margin-top:3px')])],
    [437, 24, row(18, 24, [T(40, 142, 'Drawing Order', 'color:#4a4a4a;font-weight:500;font-size:19.5px')])],
    [478, 24, row(18, 24, [I(22, 'triopen', 10, 10), I(38, 'map', 24, 24), T(70, 35, 'Map', tx, .5)])],
    [508, 38, row(18, 38, [I(42, 'triclosed', 8, 13, -.5), [52, 382, `<div class="sel">${row(53, 36, [C(54, 0), T(82, 125, 'output_Slope.tif', tx, .5)])}</div>`]])],
    [552, 25, row(18, 25, [I(38, 'triopen', 10, 10), C(54, 1), T(82, 152, 'output_Hillshade.tif', tx, .5)])],
    [589, 24, row(18, 24, [T(58, 45, 'Value', 'color:#4a4a4a;font-weight:600;font-size:17px')])],
    [617, 72, row(18, 72, [bar(60, 30, 'height:72px;background:linear-gradient(#fcfcfc,#000)'), [98.5, 31, `<div class="stack" style="height:73px;justify-content:space-between"><fit-text w="30" style="${tx}">254</fit-text><fit-text w="10" style="${tx}">0</fit-text></div>`]])],
    [699, 24, row(18, 24, [I(38, 'triopen', 10, 10, -.5), C(54, 0), T(82, 160, 'output_combined.tif', tx, .5)])],
    [735, 24, row(18, 24, [T(58, 34, 'RGB', 'color:#4a4a4a;font-weight:600;font-size:17px')])],
    [766, 24, row(18, 24, [bar(63, 24, 'height:20px;background:#f00'), T(98, 33, 'Red:', tx), T(147, 55, 'Band_1', tx)])],
    [795, 24, row(18, 24, [bar(63, 24, 'height:20px;background:#0f0'), T(98, 48, 'Green:', tx), T(153, 55, 'Band_2', tx)])],
    [824, 24, row(18, 24, [bar(63, 24, 'height:20px;background:#00f'), T(98, 35, 'Blue:', tx), T(145, 55, 'Band_3', tx)])],
    [860.5, 24, row(18, 24, [C(54, 1), T(82, 192, 'World Topographic Map', tx, .5)])],
    [898.5, 24, row(18, 24, [C(54, 1), T(82, 124, 'World Hillshade', tx, .5)])]
  ]));

/* ---------- map ---------- */
const road = (d, w = 2.4) => `<path d="${d}" stroke="#dddacc" stroke-width="${w + 2}"/><path d="${d}" stroke="#fff" stroke-width="${w}"/>`;
const town = (x, y, r = 3.500, sw = 1.200) => `<circle cx="${x}" cy="${y}" r="${r}" fill="#fff" stroke="#333" stroke-width="${sw}"/>`;
const label = (x, y, len, fs, t, extra = '') => `<text x="${x}" y="${y}" textLength="${len}" lengthAdjust="spacingAndGlyphs" font-size="${fs}" ${extra}>${t}</text>`;
const baseMap = `<svg width="1039" height="654" viewBox="447 306 1039 654">
<rect x="447" y="306" width="1039" height="654" fill="#f6f5f0"/>
<g fill="#ebeae1">
<path d="M447 306h170l-5 30 30 8 25-10 8 40 20 40 40 40v180l-60 0-30-30-20 10-40-20-40 10-15-30-35 20-10-25-48 10z"/>
<path d="M600 600h128v130l-30-5-25 15-15-20-12-30 10-12-18-8-20 5z"/><path d="M447 600l30 10 30-10 10 30-40 20-30-5z"/>
<path d="M560 655l20-8 25 15 5 20-8 25-12 5-8-12-15-5z"/><path d="M480 840l15-5 10 12 5 10-15 8-5 0zM480 905l20-5 30 20-10 15 20 20-20 5-20-25-25-10z"/>
<path d="M1145 306h70l25 35h-85zM1215 306h40l20 22 30 20 5 25 15 10-12 40-25 20-10 30-10-20-10-20V340zM1320 325l30-15 10 15-15 25-20-5z"/>
</g>
<g fill="#eef0e0"><path d="M560 306h60l-5 20-20 20-25-5zM575 380l50-15 8 30-30 20zM610 430l20-20 20 25-25 20zM655 306h60v20l-40 15zM790 306h160v30H800zM460 820l10-5 0 20zM568 740l12-5 2 15-10 10zM447 760l20 5 5-8 0 15-25 2zM1290 310l40-5v15zM1320 465l20-5 20 15-15 10-25-5zM1335 490l50 5-20 8z"/></g>
<g fill="#f8f7f1"><path d="M700 340l28-10v160l-20-30-30-8-5-35 15-10zM590 325l20-10 15 15-20 12zM660 500l20-10 5 22-30 5zM470 590l30-12 30-8 25 15 20-5-10 30-60 5-25 8zM615 600l25-8 0 15-30 15z"/></g>
<g fill="#e4e9d5"><path d="M555 848l62-32 23 6-2 28-26 27-12 8 5 12-5 25-10 15-15-20V895l-12-15z"/><path d="M545 928l25-4 22 18-20 10z"/><path d="M1277 529l36-22 28 31-64-4z"/><path d="M1382 350l40 15 64 0v78h-98l-10-10 5-30 0-55z"/></g>
<path d="M1447 365h39v78h-48v-60z" fill="#dfe9cc"/>
<path d="M590 846h18v17h-18zM1370 368h-1zM1386 368h8v8h8v12h-14v-6h-6zM1389 433h8v20h-8z" fill="#f6f5f0"/>
<path d="M670 598l5-8 8 5 0 12-12 0z" fill="#d8d2c4"/>
<g fill="#c4eafe" stroke="#b3e0f7" stroke-width="1">
<path d="M570 960l30-26 52-37-2-8-12-3-15 30-22 14-10 8 5-16 12-20 20-16 10-8-20-3-5-12 10-14 15-15 3-20-7 0-14 0-8-10-8-8-2-12 6 9 18 6 8 10 18 0 12 6-9 6 13-1 27-17 12-14 12-12h11v173z"/>
<path d="M1255 537l19-3 67 4v-10l17-11 32-12 35-8 61-8v474H1255z"/>
<path d="M1330 357l7-5 11 3 19-10 4 10 12 3 3 12-5 40-10 23-11 14-32 11-19 10 3 19 14 14 11 22-9-5-16-20-17-28-14-23 12-14 3-20 27-23z"/>
<path d="M1236 306h6l0 20 24 8 5 6 20 10 40 4 3 8-45-8-28-12-24-8-4-10z"/>
<path d="M1277 322l8-12 10 2 12 8 0 12 8 4 6-2 3 12-10-4-10 2-10-3z"/>
<path d="M1415 380l10-15 10-20 2 22 8 5-4 10-6 25-8-6-5-8zM1464 318l8-10h14v35l-12-4zM1448 315h10v8l-10-2zM1460 400l10-5 16-12v28l-20 0zM1394 420l10-5 12 4 14-2 0 10-15 2-14-2z"/>
<path d="M638 310l12-2 14 8 6-10 -2 6 -1 15-5 20 2 18 0 15 -2 10-10 8-10-5-3-14 4-15 5-18-3-20z"/>
<path d="M677 445l8-4 5 12 10 4 5 12-10 6-8 2 8 8 10 18 20 12v12l-30-22-15-10-18-3-16 6-20 7-24 8-14 3 4-4 36-10 20-8 16-3 16 2 12-4 8-8-8-10 4-8zM575 488l6 12 6 14-8-8z"/>
<path d="M728 540l-8 2-4 15 2 8 10 2zM728 590l-12 30-4 25 16-5zM680 588l10-6 2 15 20 8-2 8-32-4 5-10zM820 306h6l-2 20 4 12 0 6-8-2zM1256 470l20-20 0 8-20 8zM1254 490l14-9 8 6-12 8zM1268 430l6 20-8-2z"/>
<path d="M715 770l7-8v20zM680 815l10-8 15-6-2 8-16 8zM590 895l12-4 0 5-8 4z"/>
</g>
<path d="M657 888l3-12 14-16 20-10 27-19v9l-30 21zM633 878l8 5 5 13-12 2z" fill="#f6f5f0" stroke="#e5e3da" stroke-width=".8"/>
<g fill="none" stroke="#94d0da" stroke-width="1.200">
<path d="M447 630l12 5 5 18-8 8 4 15-6 10-2 18-5 3M499 728l0 15 8 10 20 2 15 10M542 765l2 20 15 15 5 15-5 15-13 8 10 20 3 20 15 18M447 815l12 12 3 12-2 20 0 15 15 10 10 35M447 915l20 0 20 10 10 20 20 10M520 900l8 8-10 18 20-5 20 10 8 18 8 10M545 935l15 0-5 12-12-2zM697 720l8 5 8 20 8 8 1 3M565 306l0 8 10 5 15-2 0-8M706 306l-5 25 10 15 17 0M1344 306l15 18 25 10 10 6"/>
<path d="M1486 366h-33l-8 8-3 70h44M1442 417H1378l-6 18 12 20 4 8 2-14 15-6h35v-25l12-8 20-4 8-14M1486 308h-28v30l-16 22 0 86 6 22h6v-25M1480 444v36h-15l-20 4"/>
</g>
<g fill="none" stroke="#cbcbc9" stroke-width="2">
<path d="M447 369l140-1 15 5 18 4 2 22-2 12 8 15 3 18 8 20 6 12 2 34 4 15-4 48-4 20-28 28H480l-14-12M463 660l4-60 0-18-5-8"/>
<path d="M447 507l27-12 48-3 20-5M447 461l48 2 48 4 60-2 38 8 48-12 30-5 30 0M497 444l50-2 40 20-3 48-10 6-12 6-40 10-48-4 0-40 5-42z"/>
<path d="M503 306l5 80 4 28 14 34 5 30M515 306l2 30 10 18 0 20 12 108M598 306l-15 60-33 60-2 70-20 20-8 30 0 95-6 42M447 580l15-13 30-25 20-18 50-10 70-10M447 413l30 20 18 18"/>
<path d="M610 455l28-25 35-16 20-15 14-30 25-25M741 306l20 25 20 20M790 306l-30 40-25 20M800 306l160 20 80-18 80-5M1180 306l-8 10-35 25M1355 306l-25 30-8 40-28 50M1178 320l45 10 30 45 25 25M1256 375l30 35M570 530l30-18 40-2"/>
<path d="M475 628l45 20 85 35 17 12 60 22 45 18" stroke-width="1.600"/>
</g>
<path d="M531 480l42 36 30 40 15 14 34 48 60 78 16 16M545 470l-25 40" fill="none" stroke="#c2c2c0" stroke-width="2.600"/>
<g fill="none">
${road('M447 349l30-18 38-20M447 360l38 32h20M553 370l0-8-6-16 8-6 26 1M530 358h22l2 6')}
${road('M584 454l8-8 40-20 38-16 22-8')}
${road('M573 518l0 78 5 22 15 20 0 20 10 20-5 15-10 10-22 40-28 35-45 58-10 12h-40M515 640l-16 22v94l-17 25-1 65-2 64 M447 905l37 3M480 915l13 15 18 4M447 944l18 0 20 10 16 4M513 937l7 20')}
${road('M562 500l20 8M592 560l10 25 60 68 22 20 44 56M596 547l12-1h102M588 533h10l12 18 34 50 29 32M600 548l-7 14v12')}
${road('M700 508l18 10 10 12M785 306l2 15-5 20M939 306v18M1042 306v12',2)}
${road('M1211 306l30 37 45 45 10 10M1256 420l15 -4 14 20-4 20 5 15 15 12 25 0 10 5 20-4 130 1M1292 386l-20 12-20 25M1310 383l-18 2M1270 400l20 14-8 16M1182 316l-28 30',2)}
</g>
<path d="M1414 306l-5 2-12 12-7 12-18 15-14 23-7 27-14 23-14 10-21 15-7 15 3 13 14 10 2 14 11 6 14 25" fill="none" stroke="#e0d6de" stroke-width="5"/>
<path d="M1409 306l-12 14-7 12-18 15-14 23-7 27-14 23-14 10-21 15-7 15 3 13 14 10 2 14 11 6 14 25" fill="none" stroke="#a39aa5" stroke-width="1.100" stroke-dasharray="8 5"/>
<g fill="#2a2a2a" font-family="Noto Sans,sans-serif" paint-order="stroke" stroke="#f6f5f0" stroke-width="2.500" stroke-opacity=".8" stroke-linejoin="round">
${label(471.5, 325, 36, 15.5, '119 ft', 'font-style="italic" fill="#6b6a4c"')}
${label(637.5, 332, 71, 15.5, 'Atascocita')}${label(538, 468, 76, 20, 'Houston')}${label(629, 511.5, 78, 17, 'Pasadena')}
${label(446.5, 566.5, 34, 15.5, 'Land')}${label(577.500, 590, 63, 15.5, 'Pearland')}${label(678.500, 626, 54, 15.5, 'League')}
${label(495.5, 831, 64, 15.5, 'Angleton')}${label(485, 908, 89.500, 15.5, 'Lake Jackson')}${label(1296, 412, 91, 17, 'Port Arthur')}
</g>
<path d="M463 333l3.500-5 3.500 5z" fill="#6b6a5c"/>
${town(632.500, 339)}${town(531, 477, 4, 1.600)}${town(623, 519, 4, 1.600)}${town(572.500, 597)}${town(673, 633)}${town(490.500, 837)}${town(480, 915)}${town(1290, 420, 4, 1.600)}
<path d="M497 375l2-3 6 2 5-2 5 2 6-2 3 3q4 16-6 20l-8 4-8-4q-8-4-5-20z" fill="#fff" stroke="#444" stroke-width="1.200"/><path d="M496 379h29" stroke="#444"/><text x="510" y="394.500" text-anchor="middle" font-family="Noto Sans,sans-serif" font-size="12" fill="#333">45</text>
<path d="M457.500 610.500h18v20h-18z" fill="#fff" stroke="#777" stroke-width="1.300"/><text x="466.500" y="626" text-anchor="middle" font-family="Noto Sans,sans-serif" font-size="13" fill="#333">6</text>
<path d="M814 300q-2 10 6 11l9 1 9-1q8-1 6-11z" fill="#fff" stroke="#444" stroke-width="1.300"/><text x="828.500" y="309" text-anchor="middle" font-family="Noto Sans,sans-serif" font-size="12" fill="#333">90</text>
</svg>`;

function paintRaster(cv) {
  const W = 1039, H = 654, X = 447, Yy = 306, ctx = cv.getContext('2d');
  let seed = 12345;
  const rnd = () => (seed = (seed * 1664525 + 1013904223) >>> 0) / 4294967296;
  const make = () => { const c = document.createElement('canvas'); c.width = W; c.height = H; const g = c.getContext('2d', { willReadFrequently: true }); g.translate(-X, -Yy); return [c, g]; };
  const [mc, m] = make();
  const poly = (pts, col) => { m.fillStyle = col; m.beginPath(); for (let i = 0; i < pts.length; i += 2) m.lineTo(pts[i], pts[i + 1]); m.closePath(); m.fill(); };
  const ell = (x, y, rx, ry, col = '#000') => { m.fillStyle = col; m.beginPath(); m.ellipse(x, y, rx, ry, 0, 0, 7); m.fill(); };
  const line = (pts, w, col = '#fff') => { m.strokeStyle = col; m.lineWidth = w; m.beginPath(); for (let i = 0; i < pts.length; i += 2) m.lineTo(pts[i], pts[i + 1]); m.stroke(); };
  m.fillStyle = '#000'; m.fillRect(X, Yy, W, H);
  poly([720,330, 1260,330, 1260,536, 1239,538, 1210,547, 1185,556, 1161,565, 1120,583, 1085,600, 1050,614, 1010,632, 985,642, 960,653, 937,662, 910,678, 887,692, 873,703, 867,719, 855,719, 840,725, 838,717, 853,700, 873,683, 887,667, 898,656, 910,658, 933,652, 940,637, 947,627, 960,624, 971,634, 985,629, 998,621, 1005,608, 990,613, 976,618, 971,608, 964,597, 950,598, 933,606, 907,612, 885,618, 870,622, 852,626, 845,623, 838,612, 848,614, 860,602, 877,577, 883,560, 887,533, 890,513, 886,500, 882,487, 870,477, 862,469, 843,475, 830,479, 817,490, 805,507, 799,520, 796,533, 785,541, 770,545, 763,540, 760,525, 750,518, 735,515, 725,511], '#fff');
  poly([715,628, 735,634, 752,637, 772,642, 764,657, 750,657, 765,672, 782,682, 782,707, 793,716, 778,728, 773,740, 778,752, 752,756, 740,768, 715,778], '#fff');
  poly([712,848, 738,831, 757,820, 790,798, 823,777, 840,763, 868,741, 843,740, 832,733, 817,731, 815,753, 793,764, 785,773, 798,773, 773,782, 760,797, 745,804, 733,816, 712,830], '#fff');
  line([728,518, 738,522, 745,540, 750,558, 753,571], 5.5); ell(728, 579, 6, 7, '#fff');
  line([785,707, 805,715, 822,722], 1.5); line([857,722, 872,729, 892,735], 1.6); line([868,743, 887,747], 1.2);
  line([773,758, 787,767], 2); ell(763, 763, 5, 2, '#fff'); ell(762, 771, 3, 2, '#fff');
  line([815,755, 838,753], 1.6, '#000'); line([838,753, 842,741], 2, '#000');
  ell(737, 675, 4, 7); ell(742, 751, 4.5, 6); line([750,685, 765,682, 778,685], 3.5, '#000');
  poly([882,447, 889,444, 898,445, 906,449, 907,461, 901,470, 893,474, 888,470, 883,460], '#000');
  poly([815,477, 820,470, 833,465, 834,474, 827,482, 819,486, 814,484], '#000');
  ell(828, 459, 6, 4); ell(842, 421, 4, 6); ell(847, 426, 4, 3);
  poly([867,419, 873,412, 879,420, 872,424], '#000'); ell(883, 402, 3.5, 3.5); ell(836, 445, 2, 5); ell(846, 452, 8, 2); ell(862,458,5,2); ell(857,436,3,2);
  line([870,470, 872,476], 1.2, '#fff'); line([880,497, 874,506], 1.5, '#fff'); line([884,488, 888,494], 2, '#fff');
  ell(938, 591, 6, 4); ell(893, 610, 7, 4); ell(903, 592, 4, 3); ell(915, 590, 3, 2); ell(960,604,10,5);
  ell(1202, 529, 5, 4); ell(1208, 534, 5, 2); ell(1228, 466, 4, 4); ell(1179, 444, 3, 3); ell(1112, 519, 4, 4); ell(1249, 513, 8, 4); ell(1254, 433, 4, 4); ell(967, 437, 3, 2); ell(963, 442, 2, 2); ell(1245,490,2,6); ell(1234,496,4,2); ell(1240,523,4,3); ell(1165,538,5,3); ell(1097,529,3,2); ell(1055,525,3,2); ell(1045,490,4,2);
  const mask = m.getImageData(0, 0, W, H).data;
  const N = new Float32Array(W * H), S = new Float32Array(W * H);
  for (let i = 0; i < N.length; i++) N[i] = rnd();
  for (let y = 1; y < H - 1; y++) for (let x = 1; x < W - 1; x++) {
    const i = y * W + x;
    S[i] = (N[i] * 1.2 + (N[i - 1] + N[i + 1] + N[i - W] + N[i + W]) * .55 + (N[i - W - 1] + N[i + W + 1] + N[i - W + 1] + N[i + W - 1]) * .15) / 4;
  }
  const [nc, n] = make(), im = n.createImageData(W, H), d = im.data;
  for (let y = 0; y < H; y++) for (let x = 0; x < W; x++) {
    const i = y * W + x;
    const sx = Math.min(W - 1, Math.max(0, Math.round(x + (N[i] - .5) * 2.4))), sy = Math.min(H - 1, Math.max(0, Math.round(y + (S[i] - .5) * 6)));
    const on = mask[(sy * W + sx) * 4] > 128;
    const v = on ? Math.max(0, Math.min(176, (S[i] - .475) * 640)) : 180;
    d[i * 4] = d[i * 4 + 1] = d[i * 4 + 2] = v; d[i * 4 + 3] = 255;
  }
  n.putImageData(im, 0, 0);
  const out = [729,337, 798,337, 798,338, 877,338, 877,339, 963,339, 963,341, 1060,341, 1060,342, 1172,342, 1172,343, 1257,343, 1257,400, 1256,400, 1256,536, 1255,536, 1255,680, 1254,680, 1253,795, 1252,795, 1251,943, 1250,943, 1250,948, 1182,948, 1182,947, 1065,947, 1065,946, 960,946, 960,944, 873,944, 873,943, 792,943, 792,942, 719,942, 719,890, 720,890, 720,818, 722,818, 722,720, 723,720, 723,630, 724,630, 724,600, 725,600, 725,530, 727,530, 727,450, 728,450, 728,385, 729,385];
  ctx.translate(-X, -Yy);
  ctx.beginPath(); for (let i = 0; i < out.length; i += 2) ctx.lineTo(out[i], out[i + 1]); ctx.closePath(); ctx.clip();
  ctx.drawImage(nc, X, Yy);
}
define('map-canvas', `:host{display:grid;width:1039px;height:654px;overflow:hidden}svg,canvas{grid-area:1/1;display:block}ui-icon{grid-area:1/1;place-self:end;margin:0 11px 11px 0}`,
  baseMap + '<canvas width="1039" height="654"></canvas><ui-icon name="note" w="32" h="28"></ui-icon>',
  el => paintRaster(el.shadowRoot.querySelector('canvas')));

const sep = x => bar(x, 2, 'height:21px;background:#a4a6a8');
define('map-status', `:host{display:block;height:35px;background:#f7f9f9}.scale{width:150px;height:33px;border:2px solid #bcbec3;background:#fff}`,
  row(447, 35, [[455, 150, `<div class="scale">${row(457, 29, [T(464, 92, '1:1,037,670', 'color:#1f1f1f;font-size:17.500px', 1), I(585, 'chevg', 12, 8, 1)])}</div>`, .5], sep(611), I(621, 'gridadd', 24), I(653, 'grid', 20, 20, -.5), I(683, 's3', 25, 23), I(714, 's4', 25, 24, -.5), I(744, 's5', 25, 24), I(776, 's6', 25, 24), I(811, 'chev', 12, 8, 2), sep(835), T(857, 238, '238,310.01E 3,351,165.94N m', tx, 2), I(1109, 'chevb', 14, 9, 1), sep(1145), I(1157, 'zoomselb', 24), T(1187, 156, 'Selected Features: 0', 'color:#a0a0a0;font-size:17.500px', .5), sep(1353), I(1369, 'selclear', 18, 18, 1), sep(1401), I(1414, 'pause', 18, 22), sep(1443), I(1454, 'refresh', 24)]));
define('map-view', `:host{display:block;width:1041px;height:727px;flex:none}.bar{display:flex;justify-content:space-between;align-items:center;height:32px;padding-right:7px}
.tab{width:115px;height:36px;background:#005da6;border-radius:5px 5px 0 0;margin-top:4px}.line{height:3px;background:#005da6}.l2{height:2px;background:#c5d3df}.body{border:1px solid #d4d6da;border-top:0}.bar>ui-icon{padding-top:2px}`,
  `<div class="bar"><div class="tab">${row(446, 35, [I(455, 'map', 24, 24), T(486, 36, 'Map', 'color:#fff;font-size:17.500px', .5), I(535, 'xw', 15, 15, -1)])}</div><ui-icon name="chevg" w="12" h="8"></ui-icon></div><div class="line"></div><div class="l2"></div><div class="body"><map-canvas></map-canvas><map-status></map-status></div>`);

/* ---------- catalog pane ---------- */
const treeRow = (cells, cls = '') => row(1505, 37, cells, cls);
const file = name => treeRow([I(1567, 'triclosed', 8, 13), I(1585, 'raster', 24, 20, -2), name]);
const lt = 'LT05_L1TP_025040_20111031';
define('catalog-tree', `:host{display:block;width:344px;height:528px;overflow:hidden}.row{margin:0}.first{margin-top:-21px}.sel{width:280px;height:37px;background:#cacaca;border:2px solid #8e8e8e}`,
  `<div class="first">${treeRow([I(1612, 'formula', 20, 24), T(1646, 203, '6adcf881c31a43b89b5b1', tx)])}</div>` +
  treeRow([I(1585, 'atbx', 27, 25, 1), T(1621, 103, 'Lab7_AL.atbx', tx)]) +
  treeRow([I(1539, 'triopen', 9, 9), I(1561, 'folder', 23, 18, -1), T(1597, 35, 'data', tx)]) +
  treeRow([I(1567, 'triclosed', 8, 13), I(1585, 'folder', 23, 18, -1), T(1621, 232, lt, tx)]) +
  [['band1.TIF', 78], ['band2.TIF', 78], ['band3.TIF', 78], ['band4.TIF', 78], ['DEM.tif', 58], [lt, 232], [lt, 232], ['output_combined.tif', 161], ['output_Hillshade.tif', 153]].map(([t, w]) => file(T(1621, w, t, tx))).join('') +
  treeRow([I(1567, 'triclosed', 8, 13), [1579, 280, `<div class="sel">${row(1581, 33, [I(1585, 'raster', 24, 20, -2), T(1621, 126, 'output_Slope.tif', tx)])}</div>`]]) +
  treeRow([I(1518, 'triclosed', 8, 13), I(1537, 'locators', 23, 22, -.5), T(1573, 67, 'Locators', tx)]));

define('catalog-pane', `:host{display:block;width:388px;height:727px;flex:none}.box{height:694px;border:1.500px solid #d4d6da;border-radius:8px 8px 0 0;background:#f9f9f9}
.head{background:#f7f9f8;border-radius:8px 8px 0 0}.on{height:34px;border-bottom:4px solid #0079c1;margin-top:12px}.s{height:36px;border:2px solid #929292;background:#fff}.h{width:35px;border:2px solid #c8c8c8;border-right:0;background:#f7f7f7;padding-left:5px;display:flex;align-items:center;height:36px}.f{width:36px;padding-left:5px;display:flex;align-items:center}
.mid{display:flex;margin-left:8px;height:530px}.tw{padding-top:2px;width:345px}.vs{width:26px;background:#ebebeb;display:flex;flex-direction:column;align-items:center;padding:9px 0 9px;justify-content:space-between}
.th{width:14px;height:290px;border-radius:7px;background:#b2b2b2;margin-top:176px}.hs{display:flex;align-items:center;width:345px;height:26px;margin-left:8px;background:#ebebeb;padding:0 10px;justify-content:space-between}.ht{width:177px;height:14px;border-radius:7px;background:#b2b2b2;margin-right:116px}
.tabs{display:flex;height:33px}.ct{width:109px;height:34px;margin-top:-1px;background:#f9f9f9;border:1px solid #d4d6da;border-top:0;border-radius:0 0 6px 6px}`,
  `<div class="box"><div class="head">${row(1497, 41, [T(1505.5, 81, 'Catalog', ttl, 1.5), I(1806, 'chevg', 12, 8, 1), I(1832, 'pin', 12, 15, -.5), I(1857, 'x', 15, 15, -1)])}</div>` +
  stack(311, [
    [311, 42, row(1497, 42, [[1507, 63, `<div class="on"><fit-text w="63" style="color:#4a4a4a;font-weight:700;font-size:18px">Project</fit-text></div>`], T(1585, 50, 'Portal', 'color:#4a4a4a;font-size:18px', 1), T(1651, 88, 'Computer', 'color:#4a4a4a;font-size:18px', 1), T(1754, 78, 'Favorites', 'color:#4a4a4a;font-size:18px', 1), I(1850, 'dots', 22, 4, 2)])],
    [363, 36, row(1497, 36, [I(1505, 'back', 27), [1539, 35, '<div class="h"><ui-icon name="home" w="21" h="20"></ui-icon></div>'], [1574, 36, '<div class="s f"><ui-icon name="funnel2" w="24" h="24"></ui-icon></div>'], [1608, 268, `<div class="s" style="width:268px">${row(1610, 32, [T(1617, 110, 'Search Project', 'font-style:italic;color:#444;font-size:17.500px', .5), I(1819, 'mag', 17, 17, -.5), I(1855, 'chevg', 12, 8, 2)])}</div>`]])],
    [407, 530, `<div class="mid"><div class="tw"><catalog-tree></catalog-tree></div><div class="vs"><ui-icon name="chevup" w="10" h="7"></ui-icon><div class="th"></div><ui-icon name="chevg" w="10" h="7" ></ui-icon></div></div>`],
    [937, 24, `<div class="hs"><ui-icon name="chevl" w="6" h="10"></ui-icon><div class="ht"></div><ui-icon name="chevr" w="6" h="10"></ui-icon></div>`]]) +
  `</div><div class="tabs"><div class="ct">${row(1497, 33, [I(1505, 'cattab', 24), T(1535.5, 62, 'Catalog', 'color:#0062ad;font-size:17.500px', 1)])}</div>${row(1605, 34, [I(1616, 'toolbox', 24, 18, 0), T(1647, 118, 'Geoprocessing', tx, 1), I(1865, 'chev', 12, 8, 1.500)])}</div>`);

/* ---------- application frame ---------- */
define('gis-app', `:host{display:grid;grid-template:1008px 7px / 6px 1884px;width:1890px;height:1015px;background:#141e26}
.edge{background:#181818}.win{background:#eeeff1;border:2px solid #b9babc;border-right:0;display:flex;flex-direction:column}.panes{display:flex;margin:10px 0 0 9px}.foot{grid-column:1/3;background:linear-gradient(90deg,#1c2a33,#10181f 40%,#141c24 80%,#1e2c38)}
contents-pane{margin-right:9px}map-view{margin-right:9px}svg{display:block}`,
  `<svg class="edge" width="6" height="1008" viewBox="0 0 6 1008"><rect width="6" height="52" fill="#202020"/><path d="M6 18l-6 7 6 8" fill="none" stroke="#2b7cc4" stroke-width="3"/><path d="M0 52h6M0 81h4M0 106h6M0 364h6M0 378h6M0 391h6M0 463h6" stroke="#8e8e8e" stroke-width="1.500"/><path d="M5 72v26" stroke="#e8d3b4" stroke-width="2"/><path d="M6 165l-6 8M2 218a3 3 0 1 1 3 3M2 245a3 3 0 1 0 3-3M3 225v18M6 305q-5 0-6 5h6M0 461l5-12M6 511q-8 6 0 18M6 851q-6 3-5 9t5 9M0 925q6 1 6 7M6 951q-5 6-4 3" fill="none" stroke="#8a8a8a" stroke-width="2"/><rect y="977" width="6" height="31" fill="#2b7cd3"/><path d="M5 983l-4 5 4 5" fill="none" stroke="#fff" stroke-width="1.500"/></svg>
<div class="win"><title-bar></title-bar><ribbon-tabs></ribbon-tabs><div style="height:3px"></div><ribbon-bar></ribbon-bar><div class="panes"><contents-pane></contents-pane><map-view></map-view><catalog-pane></catalog-pane></div></div><div class="foot"></div>`);
</script>
</body>
</html>
